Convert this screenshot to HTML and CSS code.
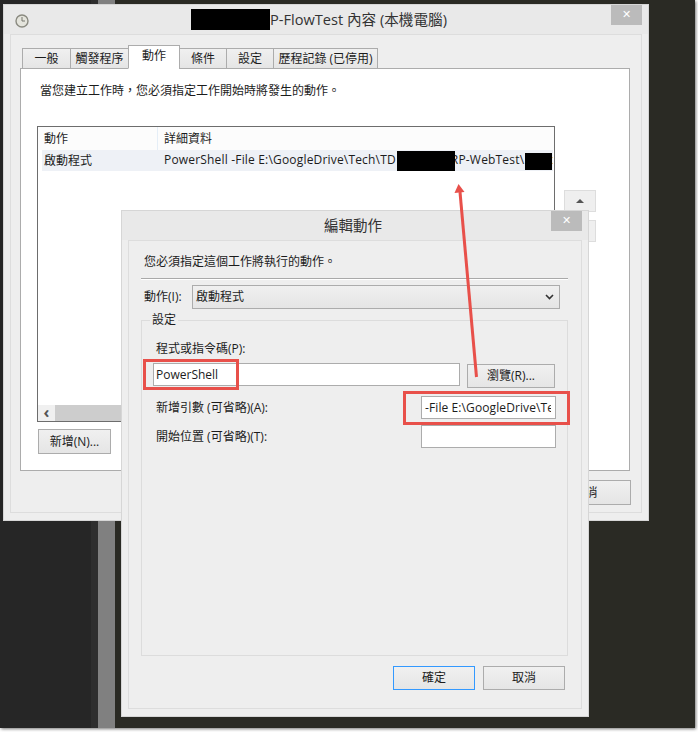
FILE: index.html
```html
<!DOCTYPE html>
<html lang="zh-Hant">
<head>
<meta charset="utf-8">
<title>編輯動作</title>
<link rel="stylesheet" href="styles.css">
</head>
<body>
<div class="desktop">
  <div class="strip strip-a"></div>
  <div class="strip strip-b"></div>
  <div class="strip strip-c"></div>

  <section class="win win-main">
    <header class="titlebar titlebar-main">
      <svg class="clock" width="14" height="14" viewBox="0 0 14 14"><circle cx="7" cy="7" r="6" fill="#e4e4dc" stroke="#8a8a80" stroke-width="1.4"/><path d="M7 3v4h3" fill="none" stroke="#77776f" stroke-width="1"/></svg>
      <h1 class="title"><span class="redact redact-title"></span>P-FlowTest 內容 (本機電腦)</h1>
      <span class="close close-main">✕</span>
    </header>
    <div class="client client-main">
      <nav class="tabs">
        <span class="tab tab-1">一般</span>
        <span class="tab tab-2">觸發程序</span>
        <span class="tab tab-3 active">動作</span>
        <span class="tab tab-4">條件</span>
        <span class="tab tab-5">設定</span>
        <span class="tab tab-6">歷程記錄 (已停用)</span>
      </nav>
      <div class="panel">
        <p class="intro">當您建立工作時，您必須指定工作開始時將發生的動作。</p>
        <div class="list-row">
          <div class="list">
            <div class="list-head"><span class="col-a">動作</span><span class="col-b">詳細資料</span></div>
            <div class="list-item"><span class="col-a">啟動程式</span><span class="col-b">PowerShell -File E:\GoogleDrive\Tech\TD<span class="redact redact-a"></span>RP-WebTest\<span class="redact redact-b"></span>x</span></div>
            <div class="list-fill"></div>
            <div class="hscroll"><span class="hscroll-arrow">‹</span><span class="hscroll-thumb"></span></div>
          </div>
          <div class="side">
            <span class="side-btn"><i class="up"></i></span>
            <span class="side-btn"></span>
          </div>
        </div>
        <div class="panel-actions"><span class="btn btn-new">新增(N)...</span></div>
      </div>
      <div class="main-foot"><span class="btn btn-main-cancel">取消</span></div>
    </div>
  </section>

  <section class="win win-dialog">
    <header class="titlebar titlebar-dialog">
      <h2 class="title title-dialog">編輯動作</h2>
      <span class="close close-dialog">✕</span>
    </header>
    <div class="client client-dialog">
      <p class="lead">您必須指定這個工作將執行的動作。</p>
      <hr class="rule">
      <div class="action-row">
        <label class="action-label">動作(I):</label>
        <div class="select"><span>啟動程式</span><svg width="9" height="6" viewBox="0 0 9 6"><path d="M1 1l3.500 3.500L8 1" fill="none" stroke="#333" stroke-width="1.600"/></svg></div>
      </div>
      <fieldset class="group">
        <legend class="legend">設定</legend>
        <div class="field-label">程式或指令碼(P):</div>
        <div class="prog-row">
          <div class="input input-prog">PowerShell<span class="mark mark-prog"></span></div>
          <span class="btn btn-browse">瀏覽(R)...</span>
        </div>
        <div class="arg-row arg-row-1">
          <span class="arg-label">新增引數 (可省略)(A):</span>
          <div class="input input-arg"><span class="clip">-File E:\GoogleDrive\Tech</span><span class="mark mark-arg"></span></div>
        </div>
        <div class="arg-row arg-row-2">
          <span class="arg-label">開始位置 (可省略)(T):</span>
          <div class="input input-arg"></div>
        </div>
      </fieldset>
      <div class="dialog-foot">
        <span class="btn btn-foot btn-ok">確定</span>
        <span class="btn btn-foot">取消</span>
      </div>
    </div>
  </section>

  <svg class="arrow" width="698" height="732" viewBox="0 0 698 732">
    <path d="M460 192L476.500 377" fill="none" stroke="#e8504a" stroke-width="3"/>
    <path d="M458.500 184L454.500 193L464.500 192Z" fill="#e8504a"/>
  </svg>
</div>
</body>
</html>
```
FILE: styles.css
```css
* { box-sizing: border-box; }
html, body { margin: 0; padding: 0; background: #fff; }
body {
  font-family: "Open Sans", "Noto Sans CJK TC", sans-serif;
  font-size: 12px;
  line-height: 16px;
  color: #1c1c1c;
}
.desktop {
  position: relative;
  width: 698px;
  height: 732px;
  overflow: hidden;
  background: #fff;
}
.strip { position: absolute; top: 0; height: 728px; }
.strip-a { left: 0; width: 91px; background: #262626; }
.strip-b { left: 91px; width: 7px; background: #2e2e2e; }
.strip-c { left: 98px; width: 17px; background: #808080; }
.desktop::before {
  content: "";
  position: absolute;
  left: 0;
  top: 0;
  width: 695px;
  height: 728px;
  background: #2a2a24;
  box-shadow: 1px 1px 3px #777;
}
.win {
  position: absolute;
  background: #eee;
  border: 1px solid #d6d6d6;
}
.win-main { left: 3px; top: 4px; width: 646px; height: 517px; }
.win-dialog { left: 121px; top: 210px; width: 468px; height: 507px; }
.titlebar { position: relative; display: flex; align-items: center; justify-content: center; background: #e9e9e9; }
.titlebar-main { height: 29px; padding-right: 14px; padding-bottom: 1px; }
.titlebar-dialog { height: 29px; padding-right: 4px; }
.title { margin: 0; font-size: 14.6px; font-weight: 400; line-height: 21px; display: flex; align-items: center; color: #333; }
.title-dialog { font-size: 14.5px; }
.clock { position: absolute; left: 11px; top: 9px; }
.close {
  position: absolute;
  top: 0;
  display: flex;
  align-items: center;
  justify-content: center;
  width: 31px;
  height: 20px;
  background: #bbb;
  color: #fff;
  font-family: "DejaVu Sans", sans-serif;
  font-size: 11px;
  font-weight: 700;
}
.close-main { right: 6px; }
.close-dialog { right: 6px; }
.redact { display: inline-block; background: #000; }
.redact-title { width: 79px; height: 21px; }
.redact-a { position: relative; width: 58px; height: 21px; margin: 0 -4px 0 1px; vertical-align: middle; }
.redact-b { width: 27px; height: 17px; margin-left: 1px; vertical-align: middle; }

.client { border: 1px solid #ddd; background: #eee; }
.client-main { margin: 0 6px; height: 479px; padding: 11px 11px 0 9px; }
.client-dialog { margin: 0 6px; height: 469px; padding: 11px 13px 0 12px; }

.tabs { display: flex; align-items: flex-end; height: 23px; padding-left: 2px; position: relative; z-index: 1; margin-bottom: -1px; }
.tab {
  display: flex;
  align-items: center;
  justify-content: center;
  height: 21px;
  border: 1px solid #acacac;
  margin-right: -1px;
  background: linear-gradient(#f0f0f0, #e5e5e5);
}
.tab-1 { width: 49px; }
.tab-2 { width: 59px; }
.tab-3 { width: 52px; }
.tab-4 { width: 48px; }
.tab-5 { width: 48px; }
.tab-6 { width: 105px; }
.tab.active { height: 24px; background: #fff; border-bottom-color: #fff; padding-bottom: 3px; }
.panel { height: 403px; background: #fff; border: 1px solid #acacac; padding: 14px 16px 0 16px; }
.intro { margin: 0 0 27px 3px; height: 16px; }
.list-row { display: flex; gap: 9px; }
.list {
  display: flex;
  flex-direction: column;
  width: 518px;
  height: 296px;
  border: 1px solid #6d6d6d;
  background: #fff;
  flex: none;
}
.list-head { display: flex; height: 23px; align-items: center; background: #fcfcfc; }
.list-head .col-a { width: 120px; padding-left: 6px; height: 23px; line-height: 23px; border-right: 1px solid #e5eef7; }
.list-head .col-b { padding-left: 6px; }
.list-item { display: flex; height: 21px; align-items: center; margin: 0 1px 0 4px; background: #eef1f6; overflow: hidden; white-space: nowrap; }
.list-item .col-a { width: 117px; flex: none; padding-left: 2px; }
.list-item .col-b { padding-left: 5px; display: block; line-height: 21px; letter-spacing: 0.18px; }
.list-fill { flex: 1; }
.hscroll { display: flex; height: 16px; background: #f0f0f0; align-items: stretch; }
.hscroll-arrow { width: 17px; text-align: center; font-weight: 700; font-size: 16px; line-height: 14px; color: #555; }
.hscroll-thumb { flex: 1; background: #cdcdcd; }
.side { display: flex; flex-direction: column; gap: 8px; padding-top: 64px; width: 32px; }
.side-btn { display: flex; align-items: center; justify-content: center; height: 22px; background: #efefef; border: 1px solid #ddd; }
.up { width: 0; height: 0; border: 4px solid transparent; border-top: 0; border-bottom: 4px solid #555; }
.panel-actions { padding: 7px 0 0 1px; }
.btn {
  display: inline-flex;
  align-items: center;
  justify-content: center;
  border: 1px solid #acacac;
  background: linear-gradient(#f0f0f0, #e5e5e5);
  height: 25px;
}
.btn-new { width: 73px; }
.main-foot { display: flex; justify-content: flex-end; padding: 9px 0 0 0; }
.btn-main-cancel { width: 91px; height: 25px; margin-right: -1px; }

.lead { margin: 0 0 0 3px; height: 20px; line-height: 16px; padding-top: 2px; }
.rule { margin: 6px 0 0; border: 0; border-top: 1px solid #a9a9a9; border-bottom: 1px solid #fff; height: 2px; }
.action-row { display: flex; align-items: center; height: 24px; margin-top: 5px; }
.action-label { width: 51px; padding-left: 3px; }
.select {
  display: flex;
  align-items: center;
  justify-content: space-between;
  width: 368px;
  height: 24px;
  padding: 0 5px 0 3px;
  border: 1px solid #acacac;
  background: linear-gradient(#f0f0f0, #e5e5e5);
}
.group { position: relative; margin: 4px 0 0; padding: 14px 12px 0 11px; width: 427px; height: 343px; border: 1px solid #dcdcdc; min-width: 0; }
.legend { padding: 0 2px; margin-left: -3px; line-height: 14px; height: 14px; }
.field-label { height: 16px; padding-left: 3px; }
.prog-row { display: flex; align-items: flex-start; gap: 7px; margin-top: 6px; }
.input {
  position: relative;
  display: flex;
  align-items: center;
  height: 23px;
  border: 1px solid #acacac;
  background: #fff;
  padding-left: 2px;
}
.input-prog { width: 307px; }
.btn-browse { width: 88px; height: 24px; margin-top: 1px; }
.arg-row { position: relative; display: flex; align-items: center; justify-content: space-between; padding-left: 3px; height: 23px; }
.arg-row-1 { margin-top: 8px; }
.arg-row-2 { margin-top: 6px; }
.input-arg { width: 135px; padding-left: 3px; margin-right: -1px; }
.clip { display: block; width: 126px; overflow: hidden; white-space: nowrap; letter-spacing: 0.1px; }
.mark { position: absolute; border: 3px solid #e8504a; pointer-events: none; }
.mark-prog { left: -11px; top: -5px; width: 96px; height: 31px; }
.mark-arg { left: -19px; top: -6px; width: 167px; height: 34px; }
.dialog-foot { display: flex; justify-content: flex-end; gap: 8px; padding: 10px 3px 0 0; }
.btn-foot { width: 82px; height: 24px; }
.btn-ok { border-color: #3399ff; }
.arrow { position: absolute; left: 0; top: 0; pointer-events: none; }
```
